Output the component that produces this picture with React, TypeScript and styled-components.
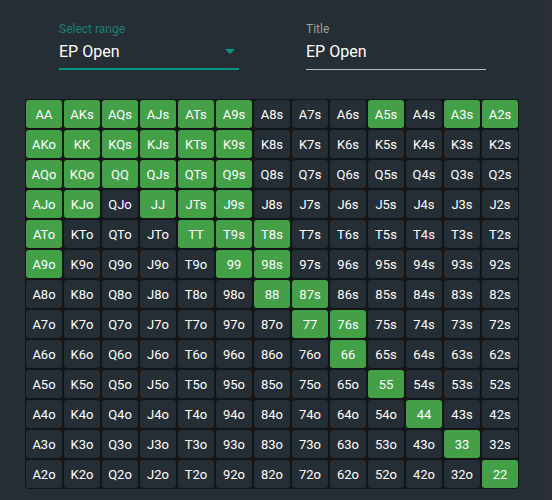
import React from "react";
import styled, { createGlobalStyle } from "styled-components";

const GlobalStyle = createGlobalStyle`
  html, body, #root {
    margin: 0;
    padding: 0;
    height: 100%;
  }
  body {
    background: #262e35;
    font-family: Roboto, "Liberation Sans", Arial, sans-serif;
  }
`;

const Page = styled.div`
  display: flex;
  height: 500px;
  width: 552px;
  overflow: hidden;
`;

const Main = styled.div`
  flex: 1;
  display: flex;
  flex-direction: column;
  background: #262e35;
`;

const Strip = styled.div`
  width: 9px;
  background: #2b3136;
`;

const FormRow = styled.div`
  display: flex;
  gap: 67px;
  padding: 22px 0 0 59px;
`;

const Field = styled.div<{ $focused?: boolean }>`
  width: 180px;
  display: flex;
  flex-direction: column;
  border-bottom: ${(p) => (p.$focused ? "2px solid #009688" : "1px solid #b9bcbe")};
`;

const Label = styled.div<{ $focused?: boolean }>`
  font-size: 12px;
  line-height: 14px;
  height: 14px;
  color: ${(p) => (p.$focused ? "#1c8074" : "#9a9fa3")};
`;

const ValueRow = styled.div`
  display: flex;
  align-items: center;
  justify-content: space-between;
  margin-top: 6px;
  padding-bottom: 7px;
`;

const Value = styled.div`
  font-size: 16px;
  line-height: 19px;
  color: #ffffff;
`;

const Arrow = styled.div`
  width: 0;
  height: 0;
  border-left: 5px solid transparent;
  border-right: 5px solid transparent;
  border-top: 5px solid #009688;
  margin-right: 4px;
`;

const Grid = styled.div`
  margin: 29px 0 0 25px;
  display: grid;
  grid-template-columns: repeat(13, 36px);
  grid-auto-rows: 28px;
  gap: 2px;
  padding: 1px;
  width: fit-content;
  background: #131618;
  border-radius: 4px;
`;

const Cell = styled.div<{ $on: boolean }>`
  display: flex;
  align-items: center;
  justify-content: center;
  border-radius: 3px;
  background: ${(p) => (p.$on ? "#43a047" : "#262e35")};
  color: #ffffff;
  font-size: 13px;
  line-height: 1;
`;

const RANKS = ["A", "K", "Q", "J", "T", "9", "8", "7", "6", "5", "4", "3", "2"];

const ON = new Set([
  "AA", "AKs", "AQs", "AJs", "ATs", "A9s", "A5s", "A3s", "A2s",
  "AKo", "KK", "KQs", "KJs", "KTs", "K9s",
  "AQo", "KQo", "QQ", "QJs", "QTs", "Q9s",
  "AJo", "KJo", "JJ", "JTs", "J9s",
  "ATo", "TT", "T9s", "T8s",
  "A9o", "99", "98s",
  "88", "87s",
  "77", "76s",
  "66", "55", "44", "33", "22",
]);

function handName(i: number, j: number): string {
  if (i === j) return RANKS[i] + RANKS[j];
  if (j > i) return RANKS[i] + RANKS[j] + "s";
  return RANKS[j] + RANKS[i] + "o";
}

export default function App() {
  const cells: string[] = [];
  for (let i = 0; i < 13; i++) {
    for (let j = 0; j < 13; j++) cells.push(handName(i, j));
  }
  return (
    <>
      <GlobalStyle />
      <Page>
        <Main>
          <FormRow>
            <Field $focused>
              <Label $focused>Select range</Label>
              <ValueRow>
                <Value>EP Open</Value>
                <Arrow />
              </ValueRow>
            </Field>
            <Field>
              <Label>Title</Label>
              <ValueRow>
                <Value>EP Open</Value>
              </ValueRow>
            </Field>
          </FormRow>
          <Grid>
            {cells.map((h) => (
              <Cell key={h} $on={ON.has(h)}>
                {h}
              </Cell>
            ))}
          </Grid>
        </Main>
        <Strip />
      </Page>
    </>
  );
}
